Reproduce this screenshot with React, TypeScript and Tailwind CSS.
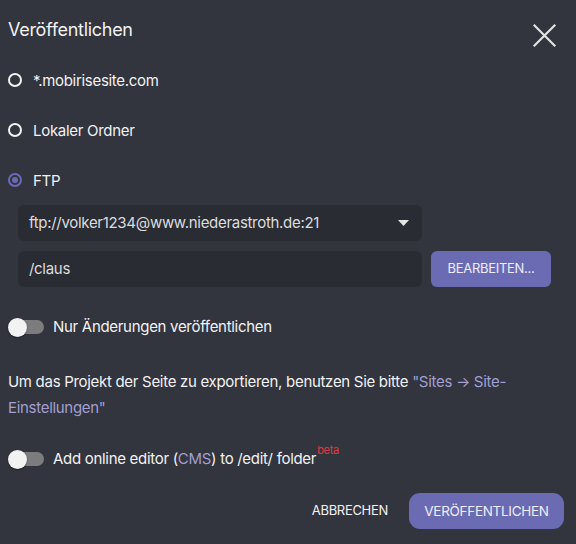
import React from "react";

function Radio({ checked }: { checked?: boolean }) {
  if (checked) {
    return (
      <span className="flex h-[14px] w-[14px] items-center justify-center rounded-full border-2 border-[#6b6bb5]">
        <span className="h-[6px] w-[6px] rounded-full bg-[#6b6bb5]" />
      </span>
    );
  }
  return <span className="block h-[14px] w-[14px] rounded-full border-2 border-[#f2f2f2]" />;
}

function Toggle() {
  return (
    <span className="relative block h-[19px] w-[36px]">
      <span className="absolute left-[1px] top-[2px] h-[14px] w-[35px] rounded-full bg-[#7c7c7e]" />
      <span className="absolute left-0 top-0 h-[19px] w-[19px] rounded-full bg-[#f2f2f2] shadow-[0_1px_2px_rgba(0,0,0,0.4)]" />
    </span>
  );
}

export default function App() {
  return (
    <div
      className="flex h-[544px] w-[576px] flex-col bg-[#32343e] pl-[8px] text-[#f2f2f2]"
      style={{ fontFamily: "Inter, 'Noto Sans', sans-serif" }}
    >
      <div className="flex h-[55px] items-start justify-between pr-[20px]">
        <div className="mt-[18px] text-[18px] leading-[24px] tracking-[-0.3px]">Veröffentlichen</div>
        <svg className="mt-[24px]" width="23" height="23" viewBox="0 0 23 23">
          <path d="M1.5 1.5 L21.5 21.5 M21.5 1.5 L1.5 21.5" stroke="#e2e2e2" strokeWidth="2.2" strokeLinecap="square" />
        </svg>
      </div>

      <div className="flex h-[50px] items-center gap-[11px] text-[15px] tracking-[-0.3px]">
        <Radio />
        <span className="mt-[2px]">*.mobirisesite.com</span>
      </div>
      <div className="flex h-[50px] items-center gap-[11px] text-[15px] tracking-[-0.3px]">
        <Radio />
        <span className="mt-[2px]">Lokaler Ordner</span>
      </div>
      <div className="flex h-[50px] items-center gap-[11px] text-[15px] tracking-[-0.3px]">
        <Radio checked />
        <span className="mt-[2px]">FTP</span>
      </div>

      <div className="ml-[10px] flex flex-col gap-[10px]">
        <div className="flex h-[36px] w-[404px] items-center justify-between rounded-[6px] bg-[#2a2c34] pl-[11px] pr-[13px] text-[15px] tracking-[-0.3px] text-[#dcdcdc]">
          <span>ftp://volker1234@www.niederastroth.de:21</span>
          <svg width="11" height="6" viewBox="0 0 11 6">
            <path d="M0 0 L11 0 L5.5 6 Z" fill="#e6e6e6" />
          </svg>
        </div>
        <div className="flex items-center gap-[9px]">
          <div className="flex h-[36px] w-[404px] items-center rounded-[6px] bg-[#2a2c34] pl-[11px] text-[15px] tracking-[-0.3px] text-[#dcdcdc]">
            /claus
          </div>
          <div className="flex h-[36px] w-[120px] items-center justify-center rounded-[6px] bg-[#6a6bb3] text-[13px] tracking-[-0.3px] text-[#eeeefa]">
            BEARBEITEN...
          </div>
        </div>
      </div>

      <div className="mt-[20px] flex h-[40px] items-center gap-[9px] text-[15px] tracking-[-0.3px]">
        <Toggle />
        <span>Nur Änderungen veröffentlichen</span>
      </div>

      <p className="mt-[22px] pr-[8px] text-[15px] leading-[26px] tracking-[-0.3px]">
        Um das Projekt der Seite zu exportieren, benutzen Sie bitte <span className="text-[#a29fd2]">"Sites → Site-</span>
        <br />
        <span className="text-[#a29fd2]">Einstellungen"</span>
      </p>

      <div className="mt-[18px] flex h-[40px] items-center gap-[9px] text-[15px] tracking-[-0.3px]">
        <Toggle />
        <span>
          Add online editor (<span className="text-[#a29fd2]">CMS</span>) to /edit/ folder
          <sup className="relative top-[-10px] ml-[1px] text-[11px] text-[#e0393e]">beta</sup>
        </span>
      </div>

      <div className="mt-[14px] flex items-center justify-end gap-[21px] pr-[12px]">
        <span className="text-[13px] tracking-[-0.3px] text-[#f2f2f2]">ABBRECHEN</span>
        <div className="flex h-[36px] w-[155px] items-center justify-center rounded-[11px] bg-[#6a6bb3] text-[13.5px] tracking-[-0.3px] text-[#eeeefa]">
          VERÖFFENTLICHEN
        </div>
      </div>
    </div>
  );
}
